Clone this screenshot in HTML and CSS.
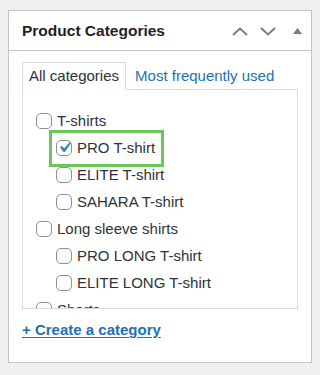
FILE: index.html
```html
<!DOCTYPE html>
<html lang="en">
<head>
  <meta charset="UTF-8">
  <meta name="viewport" content="width=device-width, initial-scale=1.0">
  <title>Product Categories</title>
  <link rel="stylesheet" href="styles.css">
</head>
<body>
  <div class="postbox">
    <div class="postbox-header">
      <h2>Product Categories</h2>
      <div class="handle-actions">
        <svg class="chev" width="16" height="9" viewBox="0 0 16 9"><path d="M1 8 L8 1.5 L15 8" /></svg>
        <svg class="chev down" width="16" height="9" viewBox="0 0 16 9"><path d="M1 1 L8 7.5 L15 1" /></svg>
        <svg class="tri" width="9" height="6" viewBox="0 0 9 6"><path d="M4.5 0 L9 6 L0 6 Z" /></svg>
      </div>
    </div>

    <div class="inside">
      <div class="tabs">
        <span class="tab active">All categories</span>
        <a class="tab" href="#">Most frequently used</a>
      </div>

      <div class="tabs-panel">
        <ul class="checklist">
          <li><span class="box"></span>T-shirts</li>
          <li class="child"><span class="picked"><span class="box checked"><svg width="21" height="21" viewBox="0 0 20 20"><path d="M14.83 4.89l1.34.94-5.81 8.38H9.020L5.78 9.67l1.34-1.25 2.57 2.4z"/></svg></span>PRO T-shirt</span></li>
          <li class="child"><span class="box"></span>ELITE T-shirt</li>
          <li class="child"><span class="box"></span>SAHARA T-shirt</li>
          <li><span class="box"></span>Long sleeve shirts</li>
          <li class="child"><span class="box"></span>PRO LONG T-shirt</li>
          <li class="child"><span class="box"></span>ELITE LONG T-shirt</li>
          <li><span class="box"></span>Shorts</li>
        </ul>
      </div>

      <a class="add-link" href="#">+ Create a category</a>
    </div>
  </div>
</body>
</html>
```

FILE: styles.css
```css
* {
  box-sizing: border-box;
  margin: 0;
  padding: 0;
}
body {
  font-family: 'Liberation Sans', Arial, sans-serif;
  background: #f0f0f1;
  color: #2c3338;
  padding: 10px 8px 0;
}
.postbox {
  background: #fff;
  border: 1px solid #c3c4c7;
  height: 353px;
}
.postbox-header {
  height: 40px;
  display: flex;
  align-items: center;
  justify-content: space-between;
  border-bottom: 1px solid #c3c4c7;
  padding: 1px 9px 0 13px;
}
.postbox-header h2 {
  font-size: 15.5px;
  font-weight: bold;
  color: #1d2327;
}
.handle-actions {
  display: flex;
  align-items: center;
}
.chev path {
  fill: none;
  stroke: #787c82;
  stroke-width: 2;
}
.chev.down {
  margin-left: 12px;
}
.tri {
  margin-left: 17px;
}
.tri path {
  fill: #787c82;
}
.inside {
  padding: 11px 13px 0;
}
.tabs {
  display: flex;
  align-items: flex-end;
  height: 27px;
  font-size: 15px;
}
.tab {
  line-height: 26px;
  padding: 0 6px;
  color: #2271b1;
  text-decoration: none;
}
.tab.active {
  color: #2c3338;
  background: #fff;
  border: 1px solid #dcdcde;
  border-bottom: none;
  height: 28px;
  margin-bottom: -1px;
  position: relative;
  margin-right: 3px;
}
.tabs-panel {
  border: 1px solid #dcdcde;
  height: 220px;
  overflow: hidden;
  padding: 17px 0 0 13px;
}
.checklist {
  list-style: none;
  font-size: 15px;
}
.checklist li {
  display: flex;
  align-items: center;
  height: 27px;
}
.checklist li.child {
  padding-left: 20px;
}
.box {
  width: 16px;
  height: 16px;
  border: 1px solid #8c8f94;
  border-radius: 5px;
  background: #fff;
  margin-right: 5px;
  flex-shrink: 0;
  display: flex;
  align-items: center;
  justify-content: center;
}
.box.checked svg {
  flex-shrink: 0;
}
.box.checked svg path {
  fill: #3582c4;
}
.picked {
  position: relative;
  display: flex;
  align-items: center;
  height: 27px;
}
.picked::before {
  content: '';
  position: absolute;
  top: -4px;
  bottom: -6px;
  left: -7px;
  right: -9px;
  border: 3px solid #6cc655;
}
.add-link {
  display: inline-block;
  margin-top: 12px;
  font-size: 15px;
  font-weight: bold;
  color: #2271b1;
  text-decoration: underline;
  text-underline-offset: 2px;
}
```
